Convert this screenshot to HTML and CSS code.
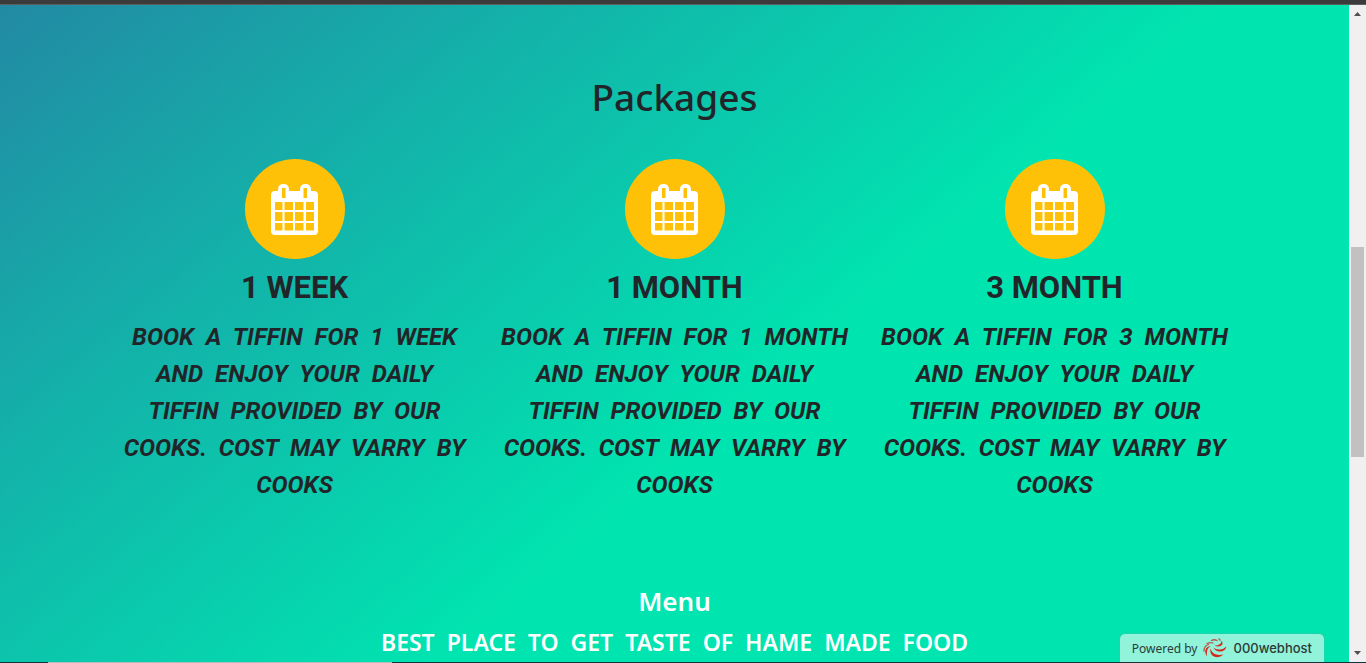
FILE: index.html
```html
<!DOCTYPE html>
<html lang="en">
<head>
<meta charset="utf-8">
<title>Tiffin Packages</title>
<link rel="stylesheet" href="styles.css">
</head>
<body>
<svg class="sprite" aria-hidden="true">
  <symbol id="calendar" viewBox="0 0 48 51">
    <path fill="#fff" fill-rule="evenodd" d="M4 7H7V5.500Q7 0 12.500 0Q18 0 18 5.500V7H29V5.500Q29 0 34.500 0Q40 0 40 5.500V7H43Q47 7 47 11V47Q47 51 43 51H4Q0 51 0 47V11Q0 7 4 7ZM11 4V14H14.500V4ZM32.500 4V14H36V4ZM4 18V26H11.500V18ZM13.500 18V26H22V18ZM24 18V26H32.500V18ZM35 18V26H43V18ZM4 28V37H11.500V28ZM13.500 28V37H22V28ZM24 28V37H32.500V28ZM35 28V37H43V28ZM4 39V46.500H11.500V39ZM13.500 39V46.500H22V39ZM24 39V46.500H32.500V39ZM35 39V46.500H43V39Z"/>
  </symbol>
</svg>
<div class="topbar"></div>
<div class="window">
  <main class="page">
    <section class="packages">
      <h1 class="title">Packages</h1>
      <div class="cards">
        <article class="card">
          <span class="badge"><svg class="icon"><use href="#calendar"/></svg></span>
          <h2 class="name">1 WEEK</h2>
          <p class="text">BOOK A TIFFIN FOR 1 WEEK AND ENJOY YOUR DAILY<br>TIFFIN PROVIDED BY OUR COOKS. COST MAY VARRY BY COOKS</p>
        </article>
        <article class="card">
          <span class="badge"><svg class="icon"><use href="#calendar"/></svg></span>
          <h2 class="name">1 MONTH</h2>
          <p class="text">BOOK A TIFFIN FOR 1 MONTH AND ENJOY YOUR DAILY<br>TIFFIN PROVIDED BY OUR COOKS. COST MAY VARRY BY COOKS</p>
        </article>
        <article class="card">
          <span class="badge"><svg class="icon"><use href="#calendar"/></svg></span>
          <h2 class="name">3 MONTH</h2>
          <p class="text">BOOK A TIFFIN FOR 3 MONTH AND ENJOY YOUR DAILY<br>TIFFIN PROVIDED BY OUR COOKS. COST MAY VARRY BY COOKS</p>
        </article>
      </div>
    </section>
    <section class="menu">
      <h2 class="menu-title">Menu</h2>
      <p class="menu-text">BEST PLACE TO GET TASTE OF HAME MADE FOOD</p>
    </section>
    <a class="host" href="#">
      <span>Powered by</span>
      <svg class="host-logo" viewBox="0 0 24 20">
        <g fill="#d9261c">
          <path d="M23.500 8.500Q22 14 16 13.500Q12 13 10.500 9.500Q13 12 17 11.500Q21 11 23.500 8.500Z"/>
          <path d="M20.500 16.500Q16 20.500 11 18.500Q6.500 16 7.500 10.500Q9 15 12.500 16.200Q16 17.500 20.500 16.500Z"/>
          <path d="M18.500 2.500Q21 6.500 17.500 8Q14.500 9 11.500 7.500Q15 7.500 17 6Q18.500 5 18.500 2.500Z"/>
          <path d="M4 18.500Q1 14 3 10.500Q4.500 8 8 8Q5 9.500 4.200 12Q3.500 15 4 18.500Z"/>
        </g>
        <path fill="none" stroke="#b8574c" stroke-width="1.300" stroke-linecap="round" d="M1 13Q1 8 5.500 6.500M4 5.500Q7 4 10 5M8.500 2.500Q11 1 14 2.500M16 .8L17 2"/>
      </svg>
      <span class="host-name">000webhost</span>
    </a>
  </main>
  <div class="scrollbar">
    <svg class="arrow" viewBox="0 0 7 4"><path fill="#505050" d="M0 4L3.500 0L7 4Z"/></svg>
    <div class="track"><div class="thumb"></div></div>
    <svg class="arrow" viewBox="0 0 7 4"><path fill="#505050" d="M0 0H7L3.500 4Z"/></svg>
  </div>
</div>
<div class="bottombar"></div>
</body>
</html>
```

FILE: styles.css
```css
* { box-sizing: border-box; }
body {
  margin: 0;
  height: 100vh;
  overflow: hidden;
  display: flex;
  flex-direction: column;
  font-family: "Noto Sans", "Open Sans", sans-serif;
  color: #212529;
}
h1, h2, p { margin: 0; }
.sprite { display: none; }
.topbar {
  flex: none;
  height: 5px;
  background: #3b3b3b;
  border-bottom: 1px solid #5e5e5e;
}
.window { flex: 1; min-height: 0; display: flex; }
.page {
  position: relative;
  flex: 1;
  overflow: hidden;
  padding-top: 68px;
  text-align: center;
  background: linear-gradient(140deg, #228aa4 0%, #00e5b0 58%);
}
.title { font-size: 37px; line-height: 48px; font-weight: 500; }
.cards {
  display: grid;
  grid-template-columns: repeat(3, 1fr);
  max-width: 1140px;
  margin: 0 auto;
  padding-top: 38px;
}
.card { padding: 0 15px; display: flex; flex-direction: column; align-items: center; }
.badge {
  width: 100px;
  height: 100px;
  border-radius: 50%;
  background: #ffc107;
  display: flex;
  align-items: center;
  justify-content: center;
}
.icon { width: 48px; height: 51px; }
.name {
  padding-top: 10px;
  font: bold 31px/38px Roboto, "Liberation Sans", sans-serif;
}
.text {
  padding-top: 12px;
  font: italic bold 24px/37px Roboto, "Liberation Sans", sans-serif;
  word-spacing: 6px;
}
.menu { padding-top: 80px; color: #fff; }
.menu-title { font-size: 26px; line-height: 34px; font-weight: 600; }
.menu-text { padding-top: 6px; font-size: 23px; line-height: 36px; font-weight: 600; word-spacing: 6px; }
.host {
  position: absolute;
  right: 25px;
  bottom: 0;
  display: flex;
  align-items: center;
  gap: 6px;
  height: 28px;
  padding: 0 12px;
  border-radius: 5px 5px 0 0;
  background: #91f3da;
  box-shadow: 0 0 2px #5fae9b;
  color: #2b3b38;
  font-size: 12px;
  text-decoration: none;
}
.host-logo { width: 24px; height: 20px; }
.host-name { font-family: Inter, sans-serif; font-size: 13px; font-weight: 500; }
.scrollbar {
  flex: none;
  width: 17px;
  padding: 7px 2px;
  background: #f0f0f0;
  display: flex;
  flex-direction: column;
  align-items: center;
}
.arrow { flex: none; width: 7px; height: 4px; }
.track { flex: 1; width: 100%; padding-top: 231px; }
.thumb { height: 210px; background: #c1c1c1; }
.bottombar {
  flex: none;
  height: 1px;
  background: linear-gradient(90deg, #13343f 0 48px, #b7b9bd 48px 392px, #13343f 392px);
}
```
